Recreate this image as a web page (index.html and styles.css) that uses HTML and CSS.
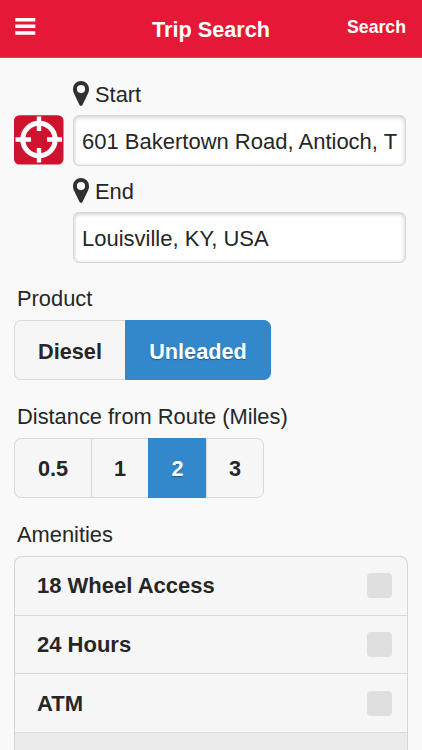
FILE: index.html
```html
<!DOCTYPE html>
<html lang="en">
<head>
<meta charset="utf-8">
<title>Trip Search</title>
<link rel="stylesheet" href="styles.css">
</head>
<body>
<header class="bar">
  <svg class="menu" width="21" height="18" viewBox="0 0 21 18"><path d="M.3 0h20v3.500H.3zM.3 6.500h20v3.500H.3zM.3 13.200h20v3.500H.3z" fill="#fff"/></svg>
  <h1 class="title">Trip Search</h1>
  <span class="search">Search</span>
</header>
<main class="page">
  <section class="places">
    <div class="place">
      <div class="place-label"><svg class="pin" width="16" height="25" viewBox="0 0 16 25"><path fill-rule="evenodd" d="M8 0a8 8 0 0 1 8 8c0 2-.4 3.300-1.100 4.800L9.500 23.900Q8 25.800 6.500 23.900L1.100 12.800C.4 11.300 0 10 0 8a8 8 0 0 1 8-8zm0 4a4.100 4.100 0 1 0 0 8.200A4.100 4.100 0 0 0 8 4z" fill="#303030"/></svg><span>Start</span></div>
      <svg class="locate" width="50" height="50" viewBox="0 0 50 50"><rect y=".2" width="49.500" height="49.300" rx="5.500" fill="#ce132e"/><circle cx="25" cy="24.500" r="16.200" fill="none" stroke="#fff" stroke-width="5"/><path d="M25 1.500v14.500M25 33v14.500M1.500 24.500H17M33 24.500H48" stroke="#fff" stroke-width="4.400"/></svg>
      <div class="field">601 Bakertown Road, Antioch, T</div>
    </div>
    <div class="place second">
      <div class="place-label"><svg class="pin" width="16" height="25" viewBox="0 0 16 25"><path fill-rule="evenodd" d="M8 0a8 8 0 0 1 8 8c0 2-.4 3.300-1.100 4.800L9.500 23.900Q8 25.800 6.500 23.900L1.100 12.800C.4 11.300 0 10 0 8a8 8 0 0 1 8-8zm0 4a4.100 4.100 0 1 0 0 8.200A4.100 4.100 0 0 0 8 4z" fill="#303030"/></svg><span>End</span></div>
      <div class="field">Louisville, KY, USA</div>
    </div>
  </section>
  <h2 class="label product">Product</h2>
  <div class="group fuel"><span class="option">Diesel</span><span class="option on">Unleaded</span></div>
  <h2 class="label">Distance from Route (Miles)</h2>
  <div class="group miles"><span class="option">0.5</span><span class="option">1</span><span class="option on">2</span><span class="option">3</span></div>
  <h2 class="label">Amenities</h2>
  <ul class="list">
    <li class="row"><span>18 Wheel Access</span><i class="check"></i></li>
    <li class="row"><span>24 Hours</span><i class="check"></i></li>
    <li class="row"><span>ATM</span><i class="check"></i></li>
    <li class="row next"></li>
  </ul>
</main>
</body>
</html>
```
FILE: styles.css
```css
* { box-sizing: border-box; }
body {
  margin: 0;
  height: 750px;
  overflow: hidden;
  background: #f9f9f9;
  color: #262626;
  font: 21.85px/26px "Liberation Sans", Arial, sans-serif;
}
.bar {
  display: grid;
  grid-template-columns: 100px 1fr 100px;
  height: 58px;
  background: #e51937;
  border-bottom: 1px solid #df3f57;
  color: #fff;
  font-weight: bold;
}
.menu { margin: 18px 0 0 15px; }
.title { margin: 17px 0 0; font-size: 21.7px; line-height: 26px; text-align: center; }
.search { margin-top: 14px; padding-right: 16px; text-align: right; font-size: 17.7px; }
.page { height: 692px; padding: 15px 14px 0; overflow: hidden; }
.place {
  display: grid;
  grid-template-columns: 59px 333px;
  grid-template-rows: 42px 50px;
}
.second { margin-top: 5px; }
.place-label { grid-column: 2; display: flex; align-items: flex-start; gap: 6px; line-height: 44px; }
.pin { margin-top: 8px; }
.locate { grid-column: 1; grid-row: 2; }
.field {
  grid-column: 2;
  grid-row: 2;
  padding-left: 8px;
  font-size: 22px;
  line-height: 52px;
  height: 51px;
  white-space: nowrap;
  border: 1px solid #d5d5d5;
  border-radius: 6px;
  background: #fff;
  box-shadow: inset 0 1px 4px rgba(0, 0, 0, .22);
}
.label { margin: 0 0 0 3px; height: 58px; padding-top: 14px; font-size: 21.85px; line-height: 46px; font-weight: normal; }
.product { padding-top: 15px; line-height: 44px; }
.group { display: flex; width: max-content; height: 60px; font-weight: bold; font-size: 21.7px; line-height: 59px; }
.option {
  text-align: center;
  height: 60px;
  border: 1px solid #d9d9d9;
  border-right: 0;
  background: #f6f6f6;
}
.option:first-child { border-radius: 7px 0 0 7px; }
.option:last-child { border-right: 1px solid #d9d9d9; border-radius: 0 7px 7px 0; }
.option.on, .option.on:last-child {
  background: #3388cc;
  border-color: #3388cc;
  color: #fff;
  text-shadow: 0 1px 1px #155e94;
}
.fuel { line-height: 61px; }
.fuel .option { width: 111px; }
.fuel .on { width: 146px; }
.miles .option { width: 57px; }
.miles .option:first-child { width: 77px; }
.miles .on { width: 58px; }
.miles .option:last-child { width: 58px; }
.list {
  margin: 0;
  padding: 0;
  width: 394px;
  height: 194px;
  overflow: hidden;
  list-style: none;
  border: 1px solid #d6d6d6;
  border-bottom: 0;
  border-radius: 8px 8px 0 0;
  background: #f6f6f6;
  font-weight: bold;
  font-size: 22px;
}
.row {
  display: flex;
  align-items: center;
  justify-content: space-between;
  height: 58.700px;
  padding: 0 15px 0 22px;
  border-bottom: 1px solid #d9d9d9;
}
.row > span { padding-top: 1px; }
.row.next { height: 17px; border: 0; background: #ebebeb; }
.check { width: 25px; height: 25px; border-radius: 4px; background: #dfdfdf; }
```
